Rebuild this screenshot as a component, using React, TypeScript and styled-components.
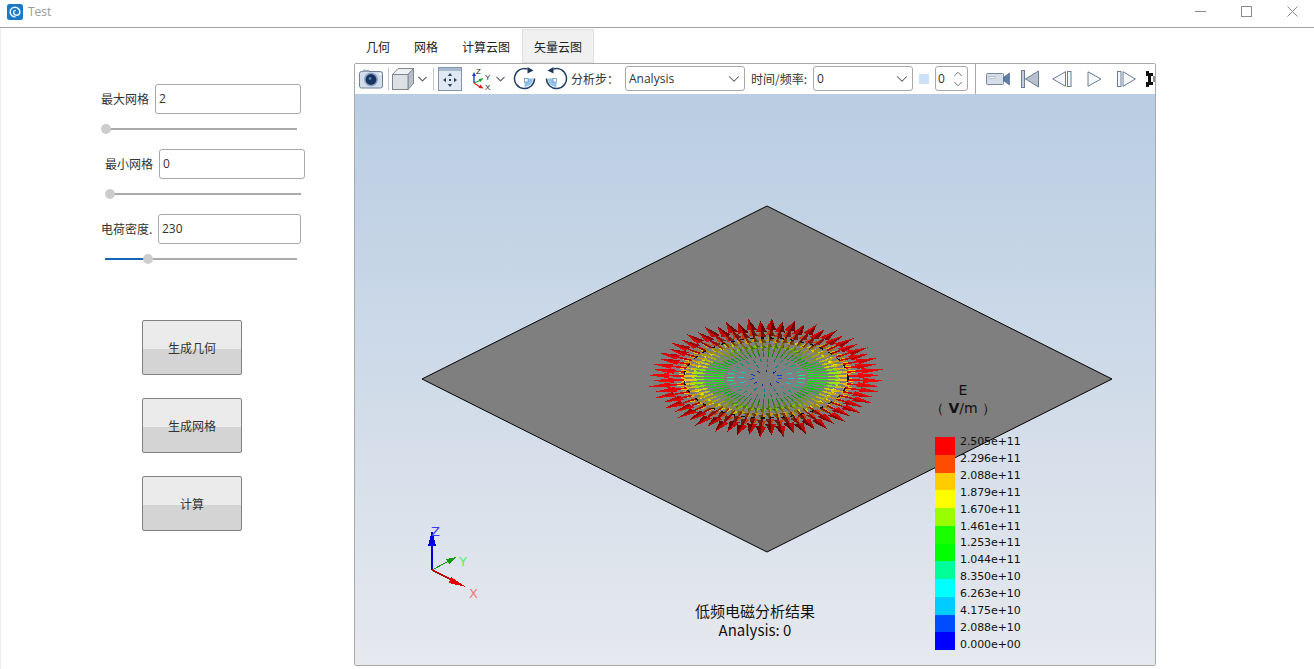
import React from "react";
import styled, { createGlobalStyle } from "styled-components";
import { ChevronDown, ChevronUp } from "lucide-react";

const bands = ["#ff0000", "#ff4d00", "#ffcc00", "#ffff00", "#99ff00", "#19ff00", "#00ff00", "#00ff99", "#00ffff", "#00ccff", "#004dff", "#0000ff"];
const legendLabels = ["2.505e+11", "2.296e+11", "2.088e+11", "1.879e+11", "1.670e+11", "1.461e+11", "1.253e+11", "1.044e+11", "8.350e+10", "6.263e+10", "4.175e+10", "2.088e+10", "0.000e+00"];

const CX = 766;
const CY = 378;

const shade = (hex: string, k: number) => {
    const n = parseInt(hex.slice(1), 16);
    const c = [(n >> 16) & 255, (n >> 8) & 255, n & 255].map((v) => Math.round(v * k));
    return `rgb(${c[0]},${c[1]},${c[2]})`;
};

const project = (u: number, v: number) => `${(CX + u).toFixed(1)},${(CY + v * 0.5).toFixed(1)}`;

// radial field of the disc, inner rings first so the red heads end up on top
const buildArrows = () => {
    const out: React.ReactElement[] = [];
    const count = 64;
    for (let r = 12; r <= 82; r += 10) {
        const s = r / 82;
        const skip = r < 20 ? 6 : r < 30 ? 4 : r < 40 ? 2 : 1;
        for (let i = 0; i < count; i += skip) {
            const a = ((i + 0.5) / count) * Math.PI * 2;
            const dx = Math.cos(a);
            const dy = Math.sin(a);
            const side = s < 1 ? 1 - 0.14 * dx * dx : 1;
            const t = Math.pow(s, 0.95) * side;
            const band = Math.min(11, Math.max(0, Math.floor((1 - t) * 12)));
            const color = bands[band];
            const stagger = i % 2 === 0 ? 1 : 0.86;
            const len = s < 0.45 ? 3 + 10 * s : 31 * t * t * stagger + 6;
            const hasHead = t > 0.62;
            const hl = hasHead ? 22 * t * t : 0;
            const w = 5.2 * t;
            const tipR = r + len;
            const baseR = tipR - hl;
            const key = `${r}-${i}`;
            const lit = Math.abs(dy);
            out.push(
                <line
                    key={`s${key}`}
                    x1={CX + r * dx}
                    y1={CY + r * dy * 0.5}
                    x2={CX + baseR * dx}
                    y2={CY + baseR * dy * 0.5}
                    stroke={shade(color, 1 - 0.5 * lit)}
                    strokeWidth={t > 0.6 ? 1.6 : 1}
                />,
            );
            if (hasHead) {
                const tip = project(tipR * dx, tipR * dy);
                const mid = project(baseR * dx, baseR * dy);
                const left = project(baseR * dx - dy * w, baseR * dy + dx * w);
                const right = project(baseR * dx + dy * w, baseR * dy - dx * w);
                out.push(<polygon key={`a${key}`} points={`${tip} ${mid} ${left}`} fill={shade(color, 1 - 0.6 * lit)} />);
                out.push(<polygon key={`b${key}`} points={`${tip} ${mid} ${right}`} fill={shade(color, 1 - 0.25 * lit)} />);
            }
        }
    }
    return out;
};

const arrows = buildArrows();

const AppIcon = () => (
    <svg width="16" height="16" viewBox="0 0 16 16">
        <rect width="16" height="16" rx="2.5" fill="#1b78c4" />
        <path d="M8 12.8a4.8 4.8 0 1 1 4.8-4.8c0 2-1.5 3.2-3.2 3.2A2.9 2.9 0 0 1 6.6 8.2c0-1.1.8-1.8 1.6-1.8" fill="none" stroke="#e6f4ff" strokeWidth="1.5" strokeLinecap="round" />
    </svg>
);

const CameraIcon = () => (
    <svg width="24" height="20" viewBox="0 0 24 20">
        <rect x="0.5" y="2.5" width="23" height="16.5" rx="2" fill="#d3deec" stroke="#6f8097" />
        <rect x="4" y="0.8" width="6" height="2" fill="#9aa9bc" />
        <circle cx="12" cy="10.5" r="7" fill="#8ea4c0" />
        <circle cx="12" cy="10.5" r="5.4" fill="#17335f" />
        <circle cx="11" cy="9.5" r="1.4" fill="#5d7fae" />
        <rect x="20" y="4.5" width="2" height="1.5" fill="#fff" />
    </svg>
);

const CubeIcon = () => (
    <svg width="22" height="22" viewBox="0 0 22 22">
        <polygon points="0.5,6.5 6,0.5 21.5,0.5 16,6.5" fill="#eef0f3" stroke="#7d8794" />
        <polygon points="16,6.5 21.5,0.5 21.5,15.5 16,21.5" fill="#b9c0c9" stroke="#7d8794" />
        <rect x="0.5" y="6.5" width="15.5" height="15" fill="#dcdfe4" stroke="#7d8794" />
    </svg>
);

const MoveIcon = () => (
    <svg width="24" height="24" viewBox="0 0 24 24">
        <rect x="0.5" y="0.5" width="23" height="23" fill="#dfe8f3" stroke="#8496ad" />
        <rect x="1" y="1" width="22" height="3" fill="#a9b9cd" />
        <g fill="#2c4468">
            <polygon points="12,6 9.8,9 14.2,9" />
            <polygon points="12,20 9.8,17 14.2,17" />
            <polygon points="5,13 8,10.8 8,15.2" />
            <polygon points="19,13 16,10.8 16,15.2" />
            <rect x="11" y="12" width="2" height="2" />
        </g>
    </svg>
);

const AxesIcon = () => (
    <svg width="20" height="24" viewBox="0 0 20 24">
        <line x1="3" y1="16" x2="3" y2="8" stroke="#1c3fd0" strokeWidth="1.4" />
        <polygon points="3,5 1,9 5,9" fill="#1c3fd0" />
        <line x1="3" y1="16" x2="10" y2="13" stroke="#19a33a" strokeWidth="1.2" />
        <polygon points="12.5,11 7.5,12 9.5,15" fill="#19a33a" />
        <line x1="3" y1="16" x2="9" y2="20" stroke="#e02020" strokeWidth="1.2" />
        <polygon points="12.5,21.5 7.5,21 9.5,17.5" fill="#e02020" />
        <AxisTag x="5" y="7">Z</AxisTag>
        <AxisTag x="14" y="13">Y</AxisTag>
        <AxisTag x="14" y="23">X</AxisTag>
    </svg>
);

const RotateIcon = ({ mirror }: { mirror?: boolean }) => (
    <svg width="23" height="23" viewBox="0 0 23 23" style={mirror ? { transform: "scaleX(-1)" } : undefined}>
        <path d="M11.5 11.5h8.5a8.5 8.5 0 0 1-8.5 8.5z" fill="#8fc3ea" />
        <rect x="11.5" y="11.5" width="3.5" height="3.5" fill="#fff" stroke="#4a7fb5" strokeWidth="0.6" />
        <path d="M14.5 2A10 10 0 1 0 21.5 11.5" fill="none" stroke="#243f66" strokeWidth="1.5" />
        <polygon points="14.5,0 20.5,3.5 14.5,6.5" fill="#1f3658" />
    </svg>
);

const VideoIcon = () => (
    <svg width="24" height="14" viewBox="0 0 24 14">
        <rect x="0.5" y="1.5" width="17" height="11" rx="1" fill="#d5dde8" stroke="#76869c" />
        <rect x="3" y="4.5" width="6" height="2" fill="#fff" stroke="#8a98aa" strokeWidth="0.5" />
        <polygon points="18,5 23.5,1 23.5,13 18,9" fill="#5f7ea8" stroke="#3f5878" strokeWidth="0.6" />
    </svg>
);

const MediaIcon = ({ kind }: { kind: "first" | "prev" | "play" | "next" }) => {
    const stroke = "#6a7c98";
    if (kind === "first") {
        return (
            <svg width="18" height="18" viewBox="0 0 18 18">
                <rect x="0.5" y="0.5" width="3" height="17" fill="#c6cedb" stroke={stroke} />
                <polygon points="4.5,9 17.5,1 17.5,17" fill="#b9c1cd" stroke={stroke} />
            </svg>
        );
    }
    if (kind === "prev") {
        return (
            <svg width="20" height="16" viewBox="0 0 20 16">
                <polygon points="0.8,8 13.5,0.7 13.5,15.3" fill="#f5f7fa" stroke={stroke} />
                <rect x="15.5" y="0.5" width="3.5" height="15" fill="#f5f7fa" stroke={stroke} />
            </svg>
        );
    }
    if (kind === "play") {
        return (
            <svg width="15" height="16" viewBox="0 0 15 16">
                <polygon points="1,0.8 14,8 1,15.2" fill="#f5f7fa" stroke={stroke} />
            </svg>
        );
    }
    return (
        <svg width="19" height="16" viewBox="0 0 19 16">
            <rect x="0.5" y="0.5" width="3.5" height="15" fill="#f5f7fa" stroke={stroke} />
            <polygon points="6,0.7 18.4,8 6,15.3" fill="#f5f7fa" stroke={stroke} />
        </svg>
    );
};

const CutOffIcon = () => (
    <svg width="12" height="16" viewBox="0 0 12 16">
        <path d="M0 0h3v2h4v3H5v6h2v3H3v2H0v-5h2V5H0z" fill="#111" />
        <path d="M7 5h5v6H7z" fill="#8d8d8d" />
    </svg>
);

const Chevron = () => (
    <svg width="9" height="6" viewBox="0 0 9 6">
        <polyline points="0.5,0.8 4.5,4.8 8.5,0.8" fill="none" stroke="#5a6472" strokeWidth="1.2" />
    </svg>
);

const TriadScene = () => (
    <g shapeRendering="crispEdges">
        <line x1="432" y1="570" x2="432" y2="538" stroke="#0000d8" strokeWidth="2" />
        <polygon points="432,530 428,546 436,546" fill="#0000e0" />
        <line x1="432" y1="570" x2="447" y2="562" stroke="#00a000" strokeWidth="1" />
        <polygon points="457,557 446,559 449,564" fill="#109a10" />
        <line x1="432" y1="570" x2="452" y2="580" stroke="#c00000" strokeWidth="2" />
        <polygon points="466,587 451,577 449,583" fill="#e00000" />
    </g>
);

const Field = ({ left, labelWidth, inputWidth, label, value, thumb }: { left: number; labelWidth: number; inputWidth: number; label: string; value: string; thumb: number }) => (
    <FieldBox $left={left}>
        <FieldRow>
            <FieldLabel $width={labelWidth}>{label}</FieldLabel>
            <FieldInput $width={inputWidth} defaultValue={value} readOnly />
        </FieldRow>
        <SliderTrack>
            <SliderFill style={{ width: thumb }} />
            <SliderThumb style={{ left: thumb - 5 }} />
        </SliderTrack>
    </FieldBox>
);

const App = () => {
    return (
        <>
            <GlobalStyle />
            <Window>
                <TitleBar>
                    <TitleLeft>
                        <AppIcon />
                        <TitleText>Test</TitleText>
                    </TitleLeft>
                    <WindowButtons>
                        <svg width="11" height="11" viewBox="0 0 11 11">
                            <line x1="0" y1="5.5" x2="11" y2="5.5" stroke="#8a8a8a" />
                        </svg>
                        <svg width="11" height="11" viewBox="0 0 11 11">
                            <rect x="0.5" y="0.5" width="10" height="10" fill="none" stroke="#8a8a8a" />
                        </svg>
                        <svg width="11" height="11" viewBox="0 0 11 11">
                            <path d="M0.5 0.5l10 10M10.5 0.5l-10 10" stroke="#8a8a8a" />
                        </svg>
                    </WindowButtons>
                </TitleBar>
                <Body>
                    <Sidebar>
                        <Field left={101} labelWidth={54} inputWidth={146} label="最大网格" value="2" thumb={1} />
                        <Field left={105} labelWidth={54} inputWidth={146} label="最小网格" value="0" thumb={1} />
                        <Field left={101} labelWidth={57} inputWidth={143} label="电荷密度." value="230" thumb={43} />
                        <ActionList>
                            <ActionButton>生成几何</ActionButton>
                            <ActionButton>生成网格</ActionButton>
                            <ActionButton>计算</ActionButton>
                        </ActionList>
                    </Sidebar>
                    <Main>
                        <Tabs>
                            <Tab>几何</Tab>
                            <Tab>网格</Tab>
                            <Tab>计算云图</Tab>
                            <Tab $active>矢量云图</Tab>
                        </Tabs>
                        <Viewer>
                            <Toolbar>
                                <Slot $left={4}><CameraIcon /></Slot>
                                <Divider $left={5} />
                                <Slot $left={3}><CubeIcon /></Slot>
                                <Slot $left={4}><Chevron /></Slot>
                                <Divider $left={6} />
                                <Slot $left={4}><MoveIcon /></Slot>
                                <Slot $left={9}><AxesIcon /></Slot>
                                <Slot $left={5}><Chevron /></Slot>
                                <Slot $left={8}><RotateIcon /></Slot>
                                <Slot $left={9}><RotateIcon mirror /></Slot>
                                <ToolLabel $left={3} $width={54}>分析步：</ToolLabel>
                                <Combo $width={120}>
                                    <ComboText>Analysis</ComboText>
                                    <ChevronDown size={18} strokeWidth={1.4} color="#555" />
                                </Combo>
                                <ToolLabel $left={6} $width={62}>时间/频率:</ToolLabel>
                                <Combo $width={100}>
                                    <ComboText>0</ComboText>
                                    <ChevronDown size={18} strokeWidth={1.4} color="#555" />
                                </Combo>
                                <Swatch />
                                <Spinner>
                                    <ComboText>0</ComboText>
                                    <SpinArrows>
                                        <ChevronUp size={14} strokeWidth={1.4} color="#555" />
                                        <ChevronDown size={14} strokeWidth={1.4} color="#555" />
                                    </SpinArrows>
                                </Spinner>
                                <TallDivider />
                                <Slot $left={10}><VideoIcon /></Slot>
                                <Slot $left={11}><MediaIcon kind="first" /></Slot>
                                <Slot $left={13}><MediaIcon kind="prev" /></Slot>
                                <Slot $left={15}><MediaIcon kind="play" /></Slot>
                                <Slot $left={15}><MediaIcon kind="next" /></Slot>
                                <Slot $left={10}><CutOffIcon /></Slot>
                            </Toolbar>
                            <Viewport>
                                <SceneSvg viewBox="355 94 800 571">
                                    <polygon points="767,206 1112,379 767,552 422,379" fill="#7f7f7f" stroke="#000" strokeWidth="1" />
                                    <g shapeRendering="crispEdges">{arrows}</g>
                                    <ellipse cx={CX} cy={CY} rx="82" ry="40" fill="none" stroke="#111" strokeWidth="1.2" strokeDasharray="4 6" shapeRendering="crispEdges" />
                                    <TriadScene />
                                    <TriadLabel x="431" y="536" fill="#3a3aff">Z</TriadLabel>
                                    <TriadLabel x="459" y="566" fill="#55ee66">Y</TriadLabel>
                                    <TriadLabel x="469" y="598" fill="#f47c7c">X</TriadLabel>
                                </SceneSvg>
                                <Caption>
                                    <div>低频电磁分析结果</div>
                                    <div>Analysis: 0</div>
                                </Caption>
                                <Legend>
                                    <LegendTitle>
                                        <div>E</div>
                                        <div>（ <b>V</b>/m ）</div>
                                    </LegendTitle>
                                    <LegendBody>
                                        <LegendBar>
                                            {bands.map((c) => (
                                                <LegendBand key={c} $color={c} />
                                            ))}
                                        </LegendBar>
                                        <LegendLabels>
                                            {legendLabels.map((l, i) => (
                                                <LegendLabel key={i}>{l}</LegendLabel>
                                            ))}
                                        </LegendLabels>
                                    </LegendBody>
                                </Legend>
                            </Viewport>
                        </Viewer>
                    </Main>
                </Body>
            </Window>
        </>
    );
};

export default App;

const GlobalStyle = createGlobalStyle`
  html, body {
    margin: 0;
    padding: 0;
    height: 100%;
    overflow: hidden;
    background: #fff;
  }
  body {
    font-family: "Noto Sans CJK SC", "Open Sans", sans-serif;
    font-size: 12px;
    color: #333;
  }
`;

const Window = styled.div`
  width: 1314px;
  height: 669px;
  display: flex;
  flex-direction: column;
`;

const TitleBar = styled.div`
  height: 27px;
  flex: none;
  display: flex;
  align-items: flex-start;
  justify-content: space-between;
  border-bottom: 1px solid #a0a0a0;
`;

const TitleLeft = styled.div`
  display: flex;
  align-items: center;
  gap: 5px;
  padding: 3px 0 0 7px;
`;

const TitleText = styled.span`
  font-family: "Open Sans", sans-serif;
  font-size: 12px;
  color: #999;
`;

const WindowButtons = styled.div`
  display: flex;
  gap: 35px;
  padding: 6px 16px 0 0;
`;

const Body = styled.div`
  flex: 1;
  min-height: 0;
  display: flex;
  border-left: 1px solid #ececec;
`;

const Sidebar = styled.div`
  width: 353px;
  flex: none;
  padding-top: 56px;
  box-sizing: border-box;
`;

const FieldBox = styled.div<{ $left: number }>`
  margin: 0 0 19px ${(p) => p.$left - 1}px;
`;

const FieldRow = styled.div`
  display: flex;
  align-items: center;
  height: 30px;
`;

const FieldLabel = styled.label<{ $width: number }>`
  width: ${(p) => p.$width}px;
  flex: none;
  padding-bottom: 1px;
  white-space: nowrap;
  color: #333;
`;

const FieldInput = styled.input<{ $width: number }>`
  width: ${(p) => p.$width}px;
  height: 30px;
  box-sizing: border-box;
  padding: 0 3px 1px;
  border: 1px solid #a8a8a8;
  border-radius: 3px;
  outline: none;
  font-family: "Open Sans", sans-serif;
  font-size: 12px;
  color: #333;
`;

const SliderTrack = styled.div`
  position: relative;
  width: 192px;
  height: 2px;
  margin: 14px 0 0 4px;
  background: #aaa;
`;

const SliderFill = styled.div`
  height: 2px;
  background: #1565b5;
`;

const SliderThumb = styled.div`
  position: absolute;
  top: -4px;
  width: 10px;
  height: 10px;
  border-radius: 50%;
  background: #cdcdcd;
`;

const ActionList = styled.div`
  margin: 60px 0 0 141px;
  display: flex;
  flex-direction: column;
  gap: 23px;
`;

const ActionButton = styled.button`
  width: 100px;
  height: 55px;
  padding: 0;
  box-sizing: border-box;
  border: 1px solid #808080;
  border-radius: 2px;
  background: linear-gradient(#ebebeb 52%, #d4d4d4 52%);
  font-family: inherit;
  font-size: 12px;
  color: #333;
`;

const Main = styled.div`
  width: 802px;
  flex: none;
  display: flex;
  flex-direction: column;
  padding-bottom: 3px;
`;

const Tabs = styled.div`
  height: 35px;
  flex: none;
  display: flex;
  align-items: flex-end;
`;

const Tab = styled.div<{ $active?: boolean }>`
  height: 34px;
  box-sizing: border-box;
  padding: 0 12px;
  display: flex;
  align-items: center;
  color: #222;
  background: ${(p) => (p.$active ? "#f0f0f0" : "transparent")};
  box-shadow: ${(p) => (p.$active ? "inset 0 0 0 1px #e0e0e0" : "none")};
`;

const Viewer = styled.div`
  flex: 1;
  min-height: 0;
  display: flex;
  flex-direction: column;
  border: 1px solid #a9a9a9;
  border-radius: 2px;
  overflow: hidden;
`;

const Toolbar = styled.div`
  height: 30px;
  flex: none;
  box-sizing: border-box;
  padding-bottom: 1px;
  display: flex;
  align-items: center;
  overflow: hidden;
  background: #fff;
`;

const Slot = styled.span<{ $left: number }>`
  flex: none;
  display: flex;
  align-items: center;
  margin-left: ${(p) => p.$left}px;
`;

const AxisTag = styled.text`
  font-family: "Liberation Sans", sans-serif;
  font-size: 8px;
  fill: #222;
`;

const Divider = styled.span<{ $left: number }>`
  flex: none;
  width: 1px;
  height: 22px;
  margin-left: ${(p) => p.$left}px;
  background: #c4c4c4;
`;

const TallDivider = styled.span`
  flex: none;
  width: 1px;
  height: 30px;
  margin-left: 7px;
  background: #a9a9a9;
`;

const ToolLabel = styled.span<{ $left: number; $width: number }>`
  flex: none;
  width: ${(p) => p.$width}px;
  margin-left: ${(p) => p.$left}px;
  padding-bottom: 1px;
  white-space: nowrap;
  color: #333;
`;

const Combo = styled.div<{ $width: number }>`
  flex: none;
  width: ${(p) => p.$width}px;
  height: 25px;
  box-sizing: border-box;
  padding: 0 1px 0 3px;
  display: flex;
  align-items: center;
  justify-content: space-between;
  border: 1px solid #a8a8a8;
  border-radius: 3px;
`;

const ComboText = styled.span`
  font-family: "Open Sans", sans-serif;
  font-size: 12px;
  line-height: 14px;
  color: #333;
`;

const Swatch = styled.span`
  flex: none;
  width: 10px;
  height: 10px;
  margin-left: 6px;
  background: #cce0f8;
`;

const Spinner = styled.div`
  flex: none;
  width: 33px;
  height: 25px;
  margin-left: 6px;
  box-sizing: border-box;
  padding-left: 2px;
  display: flex;
  align-items: center;
  justify-content: space-between;
  border: 1px solid #a8a8a8;
  border-radius: 3px;
`;

const SpinArrows = styled.span`
  display: flex;
  flex-direction: column;
  margin-right: 2px;
  svg {
    display: block;
    margin: -2px 0;
  }
`;

const Viewport = styled.div`
  position: relative;
  flex: 1;
  min-height: 0;
  background: linear-gradient(#b9cde3, #e6e9ee);
`;

const SceneSvg = styled.svg`
  display: block;
  width: 100%;
  height: 100%;
`;

const TriadLabel = styled.text`
  font-family: "DejaVu Sans", sans-serif;
  font-size: 13px;
`;

const Caption = styled.div`
  position: absolute;
  left: 300px;
  top: 507px;
  width: 200px;
  text-align: center;
  font-size: 15px;
  line-height: 19px;
  color: #111;
`;

const Legend = styled.div`
  position: absolute;
  left: 580px;
  top: 287px;
`;

const LegendTitle = styled.div`
  width: 100px;
  margin-left: -22px;
  text-align: center;
  font-family: "DejaVu Sans", sans-serif;
  font-size: 14px;
  line-height: 18px;
  color: #111;
`;

const LegendBody = styled.div`
  display: flex;
  margin-top: 20px;
`;

const LegendBar = styled.div`
  width: 20px;
  height: 213px;
  display: flex;
  flex-direction: column;
`;

const LegendBand = styled.div<{ $color: string }>`
  flex: 1;
  background: ${(p) => p.$color};
`;

const LegendLabels = styled.div`
  margin: -3px 0 0 5px;
`;

const LegendLabel = styled.div`
  height: 16.92px;
  line-height: 16.92px;
  font-family: "DejaVu Sans", sans-serif;
  font-size: 11px;
  letter-spacing: -0.1px;
  color: #111;
  white-space: nowrap;
`;
